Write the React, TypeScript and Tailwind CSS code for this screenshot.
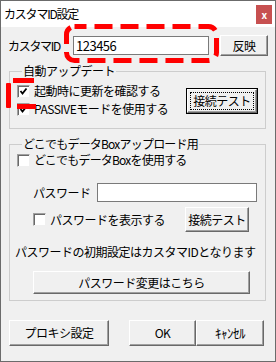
import React from "react";

const Check = ({checked}: {checked?: boolean}) => (
    <span className="w-[13px] h-[13px] shrink-0 bg-white border border-t-[#a0a0a0] border-l-[#a0a0a0] border-r-[#f0f0f0] border-b-[#f0f0f0] shadow-[inset_1px_1px_0_#696969] flex items-center justify-center">
        {checked && (
            <svg width="9" height="9" viewBox="0 0 9 9">
                <path d="M1.5 4 L3.5 6.5 L7.5 1.5" stroke="#000" strokeWidth="1.8" fill="none" />
            </svg>
        )}
    </span>
)

const Btn = ({children, className = ""}: {children: React.ReactNode, className?: string}) => (
    <div className={"flex items-center justify-center bg-[#f0f0f0] border border-t-white border-l-white border-r-[#696969] border-b-[#696969] shadow-[inset_-1px_-1px_0_#a0a0a0] " + className}>
        {children}
    </div>
)

const Input = ({value = "", className = ""}: {value?: string, className?: string}) => (
    <div className={"bg-white border border-[#7a7a7a] pl-[2px] flex items-center text-[13px] " + className}>
        {value}
    </div>
)

export default function App() {
    return (
        <div className="relative w-[276px] h-[362px] border border-[#6b6b6b] flex flex-col text-[12px] leading-[14px] text-black tracking-[-0.5px] font-['Noto_Sans_CJK_JP','Liberation_Sans',sans-serif]">
            {/* title */}
            <div className="h-[26px] bg-white flex items-center justify-between pl-[3px] pr-[3px]">
                <span className="text-[12px] tracking-[-1.2px]">カスタマID設定</span>
                <div className="w-[16px] h-[19px] bg-[#c75050] text-white text-[10px] font-bold flex items-center justify-center mt-[1px]">x</div>
            </div>

            <div className="flex-1 bg-[#f0f0f0] flex flex-col">
                <div className="flex items-center mt-[8px] pl-[7px] h-[21px]">
                    <span className="w-[65px] tracking-[-1.3px]">カスタマID</span>
                    <Input value="123456" className="w-[136px] h-[19px]" />
                    <Btn className="ml-[11px] w-[48px] h-[21px]">反映</Btn>
                </div>

                <fieldset className="mt-[8px] ml-[8px] w-[257px] border border-[#cdcdcd] pl-[7px] pr-[7px] pb-[10px]">
                    <legend className="ml-[5px] px-[1px]">自動アップデート</legend>
                    <div className="flex items-start pt-[4px]">
                        <div className="flex flex-col">
                            <label className="flex items-center gap-[4px] h-[18px]">
                                <Check checked />
                                <span>起動時に更新を確認する</span>
                            </label>
                            <label className="flex items-center gap-[4px] h-[18px]">
                                <Check checked />
                                <span>PASSIVEモードを使用する</span>
                            </label>
                        </div>
                        <div className="ml-auto mt-[6px] border border-black">
                            <Btn className="w-[70px] h-[24px] p-[2px]">
                                <span className="w-full h-full border border-dotted border-black flex items-center justify-center">接続テスト</span>
                            </Btn>
                        </div>
                    </div>
                </fieldset>

                <fieldset className="mt-[8px] ml-[8px] w-[257px] border border-[#cdcdcd] pl-[7px] pr-[7px] pb-[6px]">
                    <legend className="ml-[5px] px-[1px] tracking-[-0.8px]">どこでもデータBoxアップロード用</legend>
                    <label className="flex items-center gap-[4px] h-[18px]">
                        <Check />
                        <span className="tracking-[-0.8px]">どこでもデータBoxを使用する</span>
                    </label>
                    <div className="flex items-center mt-[14px] ml-[16px]">
                        <span className="w-[64px]">パスワード</span>
                        <Input className="w-[160px] h-[19px]" />
                    </div>
                    <div className="flex items-center mt-[5px] ml-[16px] h-[25px]">
                        <label className="flex items-center gap-[4px] w-[152px]">
                            <Check />
                            <span>パスワードを表示する</span>
                        </label>
                        <Btn className="w-[64px] h-[25px]">接続テスト</Btn>
                    </div>
                    <p className="mt-[13px] -ml-[2px]">パスワードの初期設定はカスタマIDとなります</p>
                    <Btn className="mt-[12px] ml-[16px] w-[217px] h-[23px]">パスワード変更はこちら</Btn>
                </fieldset>

                <div className="flex mt-[19px] ml-[8px]">
                    <Btn className="w-[100px] h-[26px]">プロキシ設定</Btn>
                    <Btn className="ml-[20px] w-[67px] h-[26px]">OK</Btn>
                    <Btn className="w-[68px] h-[26px] text-[13px]">ｷｬﾝｾﾙ</Btn>
                </div>
            </div>

            {/* red annotations */}
            <svg className="absolute top-0 left-0 pointer-events-none" width="276" height="362">
                <rect x="65.5" y="25.5" width="150" height="34" rx="8" fill="none" stroke="#ff0000" strokeWidth="5" strokeDasharray="18 8" strokeDashoffset="6" />
                <rect x="12" y="77" width="21" height="5" fill="#ff0000" />
                <rect x="5" y="82" width="5" height="25" rx="1" fill="#ff0000" />
                <rect x="16" y="103" width="19" height="5" fill="#ff0000" />
            </svg>
        </div>
    )
}
